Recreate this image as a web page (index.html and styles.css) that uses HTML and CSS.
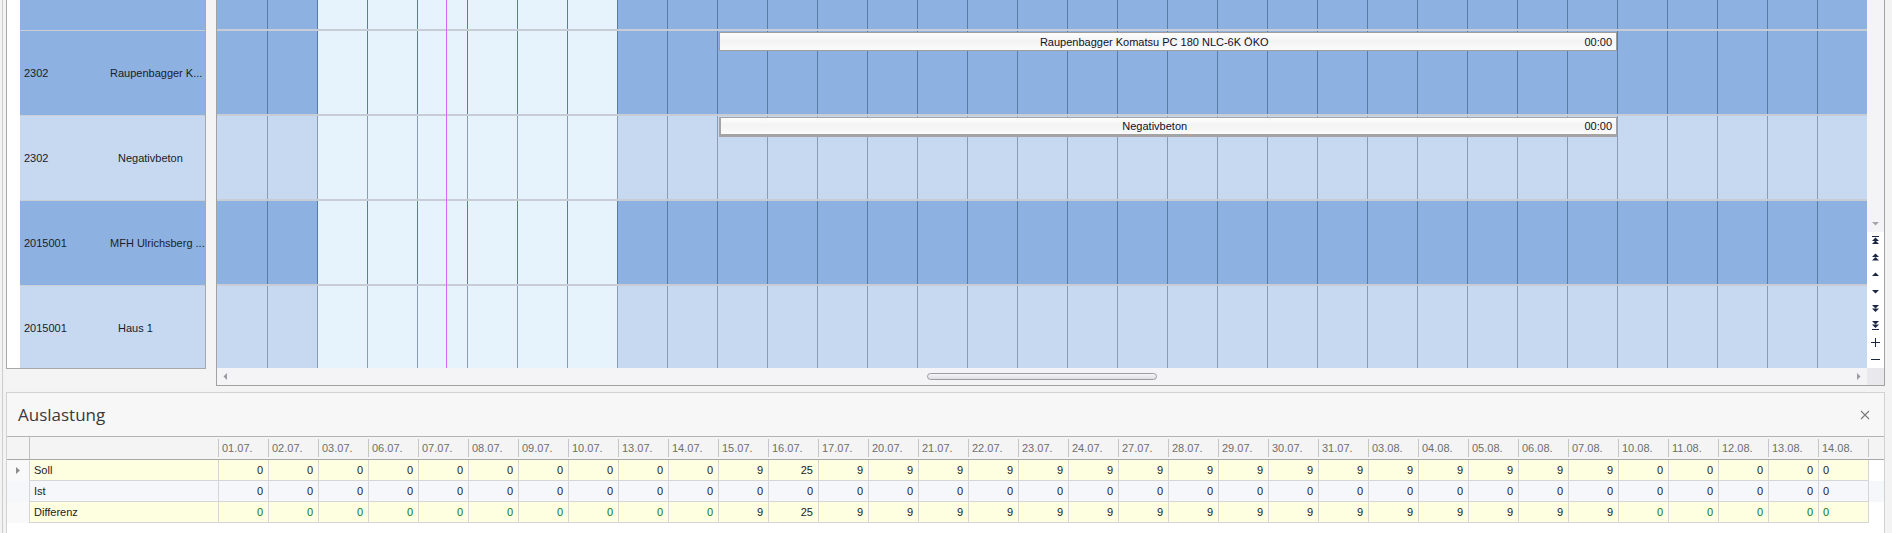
FILE: index.html
```html
<!DOCTYPE html>
<html lang="de">
<head>
    <meta charset="UTF-8">
    <meta name="viewport" content="width=device-width, initial-scale=1.0">
    <title>Plantafel - Auslastung</title>
    <link rel="stylesheet" href="styles.css">
</head>
<body>
<div class="app">
    <div class="planner">
        <div class="side">
            <div class="labels">
                <div class="lrow dark partial"></div>
                <div class="lrow dark"><span class="num">2302</span><span class="name">Raupenbagger K...</span></div>
                <div class="lrow light"><span class="num">2302</span><span class="name pad">Negativbeton</span></div>
                <div class="lrow dark"><span class="num">2015001</span><span class="name">MFH Ulrichsberg ...</span></div>
                <div class="lrow light"><span class="num">2015001</span><span class="name pad">Haus 1</span></div>
            </div>
        </div>
        <div class="chart">
            <div class="chart-body">
                <div class="grid">
                    <div class="grow dark partial"></div>
                    <div class="grow dark">
                        <div class="bar" style="left:502px;width:898px"><span class="bar-title">Raupenbagger Komatsu PC 180 NLC-6K ÖKO</span><span class="bar-time">00:00</span></div>
                    </div>
                    <div class="grow light">
                        <div class="bar picked" style="left:502px;width:898px"><span class="bar-title">Negativbeton</span><span class="bar-time">00:00</span></div>
                    </div>
                    <div class="grow dark"></div>
                    <div class="grow light"></div>
                    <!-- heute -->
                    <div class="today" style="left:229px"></div>
                </div>
                <div class="vscroll">
                    <div class="vtrack">
                        <button class="sbtn off"><svg width="9" height="9" viewBox="0 0 9 9"><polygon points="1,3 8,3 4.5,6.5"/></svg></button>
                    </div>
                    <button class="sbtn"><svg width="9" height="9" viewBox="0 0 9 9"><rect x="1" y="0" width="7" height="1"/><polygon points="4.5,1.5 8,5 1,5"/><polygon points="4.5,4.5 8,8 1,8"/></svg></button>
                    <button class="sbtn"><svg width="9" height="9" viewBox="0 0 9 9"><polygon points="4.5,0.5 8,4 1,4"/><polygon points="4.5,4 8,7.5 1,7.5"/></svg></button>
                    <button class="sbtn"><svg width="9" height="9" viewBox="0 0 9 9"><polygon points="4.5,2.5 8,6 1,6"/></svg></button>
                    <button class="sbtn"><svg width="9" height="9" viewBox="0 0 9 9"><polygon points="1,3 8,3 4.5,6.5"/></svg></button>
                    <button class="sbtn"><svg width="9" height="9" viewBox="0 0 9 9"><polygon points="1,1 8,1 4.5,4.5"/><polygon points="1,4.5 8,4.5 4.5,8"/></svg></button>
                    <button class="sbtn"><svg width="9" height="9" viewBox="0 0 9 9"><polygon points="1,0 8,0 4.5,3.5"/><polygon points="1,3.5 8,3.5 4.5,7"/><rect x="1" y="8" width="7" height="1"/></svg></button>
                    <button class="sbtn"><svg width="9" height="9" viewBox="0 0 9 9"><rect x="4" y="0" width="1" height="9"/><rect x="0" y="4" width="9" height="1"/></svg></button>
                    <button class="sbtn"><svg width="9" height="9" viewBox="0 0 9 9"><rect x="0" y="4" width="9" height="1"/></svg></button>
                </div>
            </div>
            <div class="hscroll">
                <button class="sbtn"><svg width="7" height="9" viewBox="0 0 7 9"><polygon points="5,1 5,8 1.5,4.5"/></svg></button>
                <div class="htrack"><div class="thumb" style="margin-left:693px;width:230px"></div></div>
                <button class="sbtn"><svg width="7" height="9" viewBox="0 0 7 9"><polygon points="2,1 2,8 5.5,4.5"/></svg></button>
                <div class="corner"></div>
            </div>
        </div>
    </div>

    <section class="load">
        <header class="load-head">
            <h2>Auslastung</h2>
            <button class="close"><svg width="10" height="10" viewBox="0 0 10 10"><path d="M1 1L9 9M9 1L1 9"/></svg></button>
        </header>
        <div class="load-grid">
            <table>
                <colgroup>
                    <col class="c-ind"><col class="c-name"><col span="33" class="c-day"><col class="c-fill">
                </colgroup>
                <thead>
                    <tr>
                        <th></th><th class="name-h"></th>
                        <th><span>01.07.</span></th><th><span>02.07.</span></th><th><span>03.07.</span></th><th><span>06.07.</span></th>
                        <th><span>07.07.</span></th><th><span>08.07.</span></th><th><span>09.07.</span></th><th><span>10.07.</span></th>
                        <th><span>13.07.</span></th><th><span>14.07.</span></th><th><span>15.07.</span></th><th><span>16.07.</span></th>
                        <th><span>17.07.</span></th><th><span>20.07.</span></th><th><span>21.07.</span></th><th><span>22.07.</span></th>
                        <th><span>23.07.</span></th><th><span>24.07.</span></th><th><span>27.07.</span></th><th><span>28.07.</span></th>
                        <th><span>29.07.</span></th><th><span>30.07.</span></th><th><span>31.07.</span></th><th><span>03.08.</span></th>
                        <th><span>04.08.</span></th><th><span>05.08.</span></th><th><span>06.08.</span></th><th><span>07.08.</span></th>
                        <th><span>10.08.</span></th><th><span>11.08.</span></th><th><span>12.08.</span></th><th><span>13.08.</span></th>
                        <th><span>14.08.</span></th>
                        <th><span>&nbsp;</span></th>
                    </tr>
                </thead>
                <tbody>
                    <tr class="soll">
                        <td class="ind"><svg width="5" height="7" viewBox="0 0 5 7"><polygon points="0,0 4,3.5 0,7"/></svg></td>
                        <td class="label">Soll</td>
                        <td>0</td><td>0</td><td>0</td><td>0</td><td>0</td><td>0</td><td>0</td><td>0</td><td>0</td><td>0</td>
                        <td>9</td><td>25</td>
                        <td>9</td><td>9</td><td>9</td><td>9</td><td>9</td><td>9</td><td>9</td><td>9</td>
                        <td>9</td><td>9</td><td>9</td><td>9</td><td>9</td><td>9</td><td>9</td><td>9</td>
                        <td>0</td><td>0</td><td>0</td><td>0</td><td class="last">0</td>
                        <td class="fill"></td>
                    </tr>
                    <tr class="ist">
                        <td class="ind"></td>
                        <td class="label">Ist</td>
                        <td>0</td><td>0</td><td>0</td><td>0</td><td>0</td><td>0</td><td>0</td><td>0</td><td>0</td><td>0</td>
                        <td>0</td><td>0</td>
                        <td>0</td><td>0</td><td>0</td><td>0</td><td>0</td><td>0</td><td>0</td><td>0</td>
                        <td>0</td><td>0</td><td>0</td><td>0</td><td>0</td><td>0</td><td>0</td><td>0</td>
                        <td>0</td><td>0</td><td>0</td><td>0</td><td class="last">0</td>
                        <td class="fill"></td>
                    </tr>
                    <tr class="diff">
                        <td class="ind"></td>
                        <td class="label">Differenz</td>
                        <td class="z">0</td><td class="z">0</td><td class="z">0</td><td class="z">0</td><td class="z">0</td>
                        <td class="z">0</td><td class="z">0</td><td class="z">0</td><td class="z">0</td><td class="z">0</td>
                        <td>9</td><td>25</td>
                        <td>9</td><td>9</td><td>9</td><td>9</td><td>9</td><td>9</td><td>9</td><td>9</td>
                        <td>9</td><td>9</td><td>9</td><td>9</td><td>9</td><td>9</td><td>9</td><td>9</td>
                        <td class="z">0</td><td class="z">0</td><td class="z">0</td><td class="z">0</td><td class="z last">0</td>
                        <td class="fill"></td>
                    </tr>
                </tbody>
            </table>
        </div>
    </section>
</div>
</body>
</html>
```

FILE: styles.css
```css
html, body {
    margin: 0;
    height: 100%;
}
body {
    background: #f3f3f3;
    font-family: "Liberation Sans", Arial, sans-serif;
    font-size: 11px;
    color: #1c1c26;
    overflow: hidden;
}
button {
    font: inherit;
    cursor: default;
}
.app {
    margin-left: 2px;
    border-left: 1px solid #cdcdcd;
    padding-left: 3px;
    width: 1879px;
    height: 533px;
    display: flex;
    flex-direction: column;
}

/* Plantafel oben */
.planner {
    display: flex;
    height: 386px;
    flex: none;
}
.side {
    width: 210px;
    flex: none;
    background: #f4f4f4;
}
.labels {
    width: 200px;
    height: 369px;
    box-sizing: border-box;
    border: 1px solid #a8a8a8;
    border-top: 0;
    background: #fff;
    padding-left: 13px;
    overflow: hidden;
}
.lrow {
    display: flex;
    align-items: center;
    height: 85px;
    box-sizing: border-box;
    border-bottom: 1px solid #c9ced6;
    white-space: nowrap;
}
.lrow.dark { background: #8db2e2; }
.lrow.light { background: #c6d9f0; }
.lrow.partial, .grow.partial { height: 31px; }
.num {
    width: 86px;
    padding-left: 4px;
    flex: none;
}
.name.pad { padding-left: 8px; }

.chart {
    flex: 1;
    min-width: 0;
    display: flex;
    flex-direction: column;
    border: 1px solid #a2a2a2;
    border-top: 0;
}
.chart-body {
    display: flex;
    height: 368px;
}
.grid {
    width: 1650px;
    flex: none;
    position: relative;
    overflow: hidden;
}
.grow {
    --fill: #8db2e2;
    --rule: #5a7ba6;
    position: relative;
    height: 85px;
    box-sizing: border-box;
    border-bottom: 2px solid #c8ccd4;
    background-color: var(--fill);
    background-image: repeating-linear-gradient(90deg, var(--rule) 0 1px, transparent 1px 50px), linear-gradient(#e7f3fc, #e7f3fc);
    background-position: 50px 0, 100px 0;
    background-size: 1600px 100%, 300px 100%;
    background-repeat: no-repeat;
}
.grow.light {
    --fill: #c6d9f0;
    --rule: #8a9bb4;
}
.bar {
    position: absolute;
    top: 1px;
    height: 19px;
    box-sizing: border-box;
    border: 1px solid #9d9d9d;
    background: linear-gradient(#fefefe, #f3f3f3 45%, #fbfbfb);
    display: flex;
    align-items: center;
    padding: 0 4px;
    white-space: nowrap;
    color: #10102a;
}
.bar.picked {
    height: 20px;
    border-color: #a4a4a4;
    border-width: 1px 1px 3px 2px;
}
.bar-title {
    flex: 1;
    text-align: center;
}
.today {
    position: absolute;
    top: 0;
    bottom: 0;
    width: 1px;
    background: #d06cf4;
}

/* Scrollleisten */
.sbtn {
    width: 17px;
    height: 17px;
    flex: none;
    border: 0;
    padding: 0;
    background: transparent;
    display: flex;
    align-items: center;
    justify-content: center;
    color: #1b2640;
}
.sbtn svg { fill: currentColor; }
.sbtn.off { color: #a4a4ac; }
.vscroll {
    width: 17px;
    flex: none;
    display: flex;
    flex-direction: column;
}
.vscroll > .sbtn { background: #fff; }
.vtrack {
    flex: 1;
    background: #f4f4f6;
    display: flex;
    flex-direction: column;
    justify-content: flex-end;
}
.hscroll {
    height: 17px;
    display: flex;
    background: #f4f4f6;
}
.hscroll .sbtn { color: #9a9aa2; }
.htrack {
    flex: 1;
    display: flex;
    align-items: center;
}
.thumb {
    height: 7px;
    box-sizing: border-box;
    border: 1px solid #9c9ca4;
    border-radius: 4px;
    background: linear-gradient(#f6f6f8, #dedee4);
}
.corner {
    width: 17px;
    background: #e9e9ed;
}

/* Auslastung unten */
.load {
    margin-top: 6px;
    flex: 1;
    display: flex;
    flex-direction: column;
    border: 1px solid #d2d2d2;
    border-bottom: 0;
    background: #f7f7f7;
}
.load-head {
    height: 43px;
    flex: none;
    display: flex;
    align-items: center;
    justify-content: space-between;
    padding: 0 14px 0 11px;
}
.load-head h2 {
    margin: 0;
    font-family: "Open Sans", "Noto Sans", sans-serif;
    font-size: 17px;
    font-weight: normal;
    color: #3a3a3a;
}
.close {
    border: 0;
    background: none;
    padding: 0;
    width: 10px;
    height: 10px;
    display: flex;
}
.close svg path {
    stroke: #7a7a7a;
    stroke-width: 1.1;
}
.load-grid {
    flex: 1;
    background: #fff;
    border-top: 1px solid #b4b4b4;
}
table {
    border-collapse: separate;
    border-spacing: 0;
    table-layout: fixed;
    width: 1877px;
}
col.c-ind { width: 22px; }
col.c-name { width: 189px; }
col.c-day { width: 50px; }
col.c-fill { width: 16px; }
th, td {
    padding: 0;
    box-sizing: border-box;
    font-weight: normal;
    white-space: nowrap;
}
thead th {
    height: 23px;
    background: #f4f4f4;
    border-bottom: 1px solid #a8a8a8;
    text-align: left;
    color: #6e6e6e;
    vertical-align: middle;
}
thead th.name-h { border-left: 1px solid #c0c0c0; }
thead th span {
    display: block;
    border-left: 1px solid #c6c6c6;
    padding-left: 3px;
    line-height: 18px;
}
tbody td {
    height: 21px;
    border-bottom: 1px solid #d6d6d6;
    border-left: 1px solid #d6d6d6;
    text-align: right;
    padding-right: 5px;
    background: #fefee1;
}
tbody tr.ist td { background: #f6f7fb; }
tbody td.ind {
    border: 0;
    background: #f9f9f9;
    text-align: left;
    padding: 0 0 0 9px;
}
.ind svg {
    display: block;
    fill: #8c8c8c;
}
tbody td.label {
    text-align: left;
    padding-left: 4px;
}
tbody td.last {
    text-align: left;
    padding: 0 0 0 4px;
}
tbody td.fill {
    background: #fff;
    border-bottom: 0;
}
tbody td.z { color: #147514; }
```
